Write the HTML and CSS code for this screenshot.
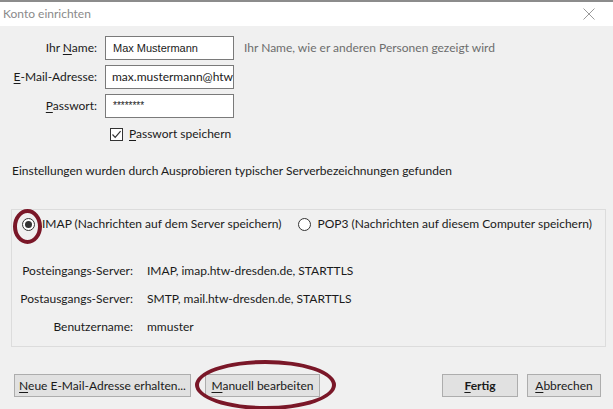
FILE: index.html
```html
<!DOCTYPE html>
<html lang="de">
<head>
    <meta charset="UTF-8">
    <meta name="viewport" content="width=device-width, initial-scale=1.0">
    <title>Konto einrichten</title>
    <link rel="stylesheet" href="styles.css">
</head>
<body>
    <div class="window">
        <div class="titlebar">
            <span class="title">Konto einrichten</span>
            <svg class="close" width="12" height="12" viewBox="0 0 12 12">
                <path d="M0.5 0.5 L11.5 11.5 M11.5 0.5 L0.5 11.5" stroke="#9a9a9a" stroke-width="1" fill="none"/>
            </svg>
        </div>

        <div class="form">
            <label class="label">Ihr <u>N</u>ame:</label>
            <div class="input input-name">Max Mustermann</div>
            <span class="hint">Ihr Name, wie er anderen Personen gezeigt wird</span>

            <label class="label"><u>E</u>-Mail-Adresse:</label>
            <div class="input input-mail">max.mustermann@htw-dresden.de</div>
            <span></span>

            <label class="label"><u>P</u>asswort:</label>
            <div class="input input-pass">********</div>
            <span></span>

            <span></span>
            <div class="check-row">
                <span class="checkbox">
                    <svg width="11" height="11" viewBox="0 0 11 11">
                        <path d="M1.5 5.5 L4.2 8.3 L9.6 2.2" stroke="#333" stroke-width="1.2" fill="none"/>
                    </svg>
                </span>
                <span><u>P</u>asswort speichern</span>
            </div>
            <span></span>
        </div>

        <p class="status">Einstellungen wurden durch Ausprobieren typischer Serverbezeichnungen gefunden</p>

        <div class="group">
            <div class="radios">
                <div class="radio-item">
                    <span class="radio checked"></span>
                    <span>IMAP (Nachrichten auf dem Server speichern)</span>
                </div>
                <div class="radio-item">
                    <span class="radio"></span>
                    <span>POP3 (Nachrichten auf diesem Computer speichern)</span>
                </div>
            </div>
            <div class="servers">
                <span class="label">Posteingangs-Server:</span>
                <span>IMAP, imap.htw-dresden.de, STARTTLS</span>
                <span class="label">Postausgangs-Server:</span>
                <span>SMTP, mail.htw-dresden.de, STARTTLS</span>
                <span class="label">Benutzername:</span>
                <span>mmuster</span>
            </div>
        </div>

        <div class="buttons">
            <div class="left-buttons">
                <button class="btn btn-new"><u>N</u>eue E-Mail-Adresse erhalten...</button>
                <button class="btn btn-manual"><u>M</u>anuell bearbeiten</button>
            </div>
            <div class="right-buttons">
                <button class="btn btn-done"><u>F</u>ertig</button>
                <button class="btn btn-cancel"><u>A</u>bbrechen</button>
            </div>
        </div>

        <!-- red markers drawn over the dialog -->
        <div class="marker marker-radio"></div>
        <div class="marker marker-manual"></div>
    </div>
</body>
</html>
```

FILE: styles.css
```css
* {
    box-sizing: border-box;
}
body {
    margin: 0;
    font-family: "Lato", "Noto Sans", sans-serif;
    font-size: 12px;
    line-height: 16px;
    color: #1a1a1a;
    white-space: nowrap;
}
u {
    text-decoration-thickness: 1px;
    text-underline-offset: 2px;
}
.window {
    position: relative;
    width: 613px;
    height: 409px;
    overflow: hidden;
    background: #f0f0f0;
    border-top: 2px solid #8c8c8c;
}
.titlebar {
    height: 24px;
    background: #fff;
    display: flex;
    align-items: center;
    justify-content: space-between;
    padding: 0 18px 0 3px;
}
.title {
    color: #8a8a8a;
}
.form {
    display: grid;
    grid-template-columns: 97px 129px auto;
    column-gap: 8px;
    row-gap: 5px;
    align-items: center;
    margin-top: 10px;
}
.label {
    text-align: right;
}
.input {
    height: 24px;
    background: #fff;
    border: 1px solid #7a7a7a;
    padding: 0 6px;
    line-height: 22px;
    overflow: hidden;
}
.input-name {
    font-family: "Liberation Sans", sans-serif;
    font-size: 11px;
    padding-left: 7px;
}
.input-pass {
    font-family: "Liberation Sans", sans-serif;
    font-size: 10px;
    padding-left: 7px;
}
.hint {
    color: #6d6d6d;
    margin-left: 2px;
}
.check-row {
    display: flex;
    align-items: center;
    gap: 6px;
    padding-left: 5px;
    margin-top: 3px;
}
.checkbox {
    width: 13px;
    height: 13px;
    border: 1px solid #333;
    background: #fff;
    display: flex;
    align-items: center;
    justify-content: center;
}
.status {
    margin: 21px 0 0 12px;
}
.group {
    margin: 30px 7px 0 11px;
    height: 138px;
    border: 1px solid #dcdcdc;
    padding-top: 6px;
}
.radios {
    display: flex;
    gap: 16px;
    padding-left: 10px;
}
.radio-item {
    display: flex;
    align-items: center;
    gap: 7px;
}
.radio {
    width: 13px;
    height: 13px;
    border: 1px solid #333;
    border-radius: 50%;
    background: #fff;
    display: flex;
    align-items: center;
    justify-content: center;
}
.radio.checked::after {
    content: "";
    width: 7px;
    height: 7px;
    border-radius: 50%;
    background: #333;
}
.servers {
    display: grid;
    grid-template-columns: 121px auto;
    column-gap: 14px;
    row-gap: 12px;
    align-items: center;
    margin-top: 31px;
}
.buttons {
    display: flex;
    justify-content: space-between;
    margin: 27px 12px 0 14px;
}
.left-buttons,
.right-buttons {
    display: flex;
    gap: 9px;
}
.btn {
    height: 23px;
    font-family: inherit;
    font-size: 12px;
    color: #1a1a1a;
    background: #e1e1e1;
    border: 1px solid #adadad;
    padding: 0 4px;
}
.btn-new {
    width: 177px;
}
.btn-manual {
    width: 115px;
    margin-left: 5px;
}
.btn-done {
    width: 76px;
    font-weight: bold;
}
.btn-cancel {
    width: 74px;
}
.marker {
    position: absolute;
    border: 4px solid #7a1728;
    border-radius: 50%;
}
.marker-radio {
    left: 13px;
    top: 207px;
    width: 29px;
    height: 35px;
}
.marker-manual {
    left: 195px;
    top: 358px;
    width: 141px;
    height: 50px;
}
```
